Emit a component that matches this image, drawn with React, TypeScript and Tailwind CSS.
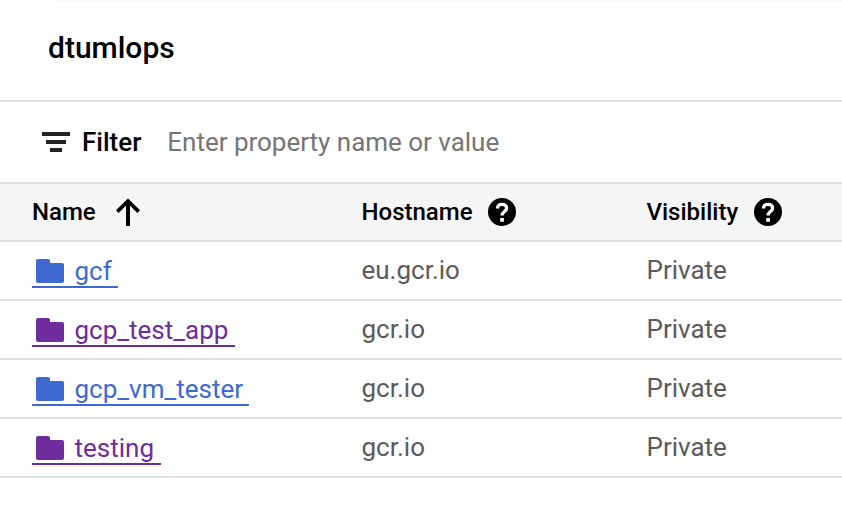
const rows = [
  { name: 'gcf', host: 'eu.gcr.io', visited: false },
  { name: 'gcp_test_app', host: 'gcr.io', visited: true },
  { name: 'gcp_vm_tester', host: 'gcr.io', visited: false },
  { name: 'testing', host: 'gcr.io', visited: true },
];

function Help() {
  return (
    <svg className="size-7 shrink-0" viewBox="0 0 28 28">
      <circle cx="14" cy="14" r="14" />
      <path d="M9.500 10.500C9.500 7.700 11.300 6.300 14 6.300s4.600 1.500 4.600 3.900c0 3.200-4.600 3.400-4.600 7.300" fill="none" stroke="#fff" strokeWidth="3.300" />
      <rect x="12.200" y="20" width="3.700" height="3.700" fill="#fff" />
    </svg>
  );
}

export default function App() {
  return (
    <div className="h-[508px] w-[842px] overflow-hidden bg-white font-[Roboto,sans-serif] text-black">
      <div className="ml-[54px] h-[2px] bg-[#f9f9f9]" />
      <header className="flex h-[100px] items-center border-b-2 border-[#e0e0e0] pb-2 pl-12 text-[30px] font-medium">
        dtumlops
      </header>
      <div className="flex h-[82px] items-center border-b-2 border-[#e0e0e0] pl-[42px] text-[26px]">
        <svg className="h-[20px] w-[28px]" viewBox="0 0 28 20" fill="#212121">
          <path d="M0 0h28v4H0zM4 8h20v4H4zM8 16h12v4H8z" />
        </svg>
        <span className="ml-3 font-medium">Filter</span>
        <span className="ml-[26px] tracking-[-0.02px] text-[#757575]">Enter property name or value</span>
      </div>
      <div className="grid h-[58px] grid-cols-[361.5px_285px_1fr] items-center border-b-2 border-[#e0e0e0] bg-[#f5f5f5] text-[24px] font-medium">
        <div className="flex items-center pl-8">
          <span className="w-16">Name</span>
          <svg className="ml-5 h-7 w-6 shrink-0" viewBox="0 0 24 28" fill="none" stroke="#000">
            <path d="M12 28V4" strokeWidth="4" />
            <path d="M1.300 13.600 12 3 22.700 13.600" strokeWidth="3.700" />
          </svg>
        </div>
        <div className="flex items-center"><span className="w-[126.5px]">Hostname</span><Help /></div>
        <div className="flex items-center"><span className="w-[107.5px]">Visibility</span><Help /></div>
      </div>
      {rows.map((r) => (
        <div key={r.name} className="grid h-[59px] grid-cols-[361.5px_285px_1fr] items-center border-b-2 border-[#e0e0e0] text-[26px] text-[#5a5a5a]">
          <div className="pl-8 pt-[7px]">
            <a className={`inline-flex h-[34px] items-center border-b-2 pl-1 pr-[6.500px] pt-[2px] ${r.visited ? 'border-[#6f2c9c] text-[#6f2c9c]' : 'border-[#3d69d0] text-[#3d69d0]'}`}>
              <svg className="h-6 w-7" viewBox="0 0 28 24" fill="currentColor">
                <path d="M2 0h10q2 0 2 2v2h12q2 0 2 2v16q0 2-2 2H2q-2 0-2-2V2q0-2 2-2z" />
              </svg>
              <span className="ml-[10.500px]">{r.name}</span>
            </a>
          </div>
          <span>{r.host}</span>
          <span>Private</span>
        </div>
      ))}
    </div>
  );
}
